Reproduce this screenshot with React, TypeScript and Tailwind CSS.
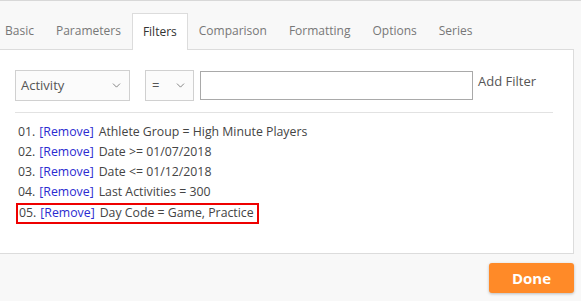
import { ChevronDown } from "lucide-react"

const tabs = ["Basic", "Parameters", "Filters", "Comparison", "Formatting", "Options", "Series"]

const filters = [
  { no: "01.", text: "Athlete Group = High Minute Players" },
  { no: "02.", text: "Date >= 01/07/2018" },
  { no: "03.", text: "Date <= 01/12/2018" },
  { no: "04.", text: "Last Activities = 300" },
  { no: "05.", text: "Day Code = Game, Practice", marked: true },
]

export default function App() {
  return (
    <div
      className="w-[581px] h-[301px] bg-[#f8f8f8] border-t border-[#d8d8d8] overflow-hidden flex flex-col text-[13px] text-[#444]"
      style={{ fontFamily: '"Open Sans", "Noto Sans", sans-serif' }}>
      <div className="flex ml-[-6px] mt-[11px] h-[37px] text-[12px]">
        {tabs.map((t) => (
          <div
            key={t}
            className={
              t === "Filters"
                ? "px-[10px] flex items-center bg-white border border-b-0 border-[#dcdcdc] text-[#333] relative top-[1px]"
                : "px-[10px] flex items-center border border-transparent text-[#777]"
            }>
            {t}
          </div>
        ))}
      </div>
      <div className="bg-white border border-l-0 border-[#dcdcdc] w-[574px] h-[205px] pl-[15px] pt-[20px]">
        <div className="flex items-center w-[538px]">
          <div className="w-[115px] h-[31px] border border-[#d0d0d0] bg-[#fbfbfb] flex items-center justify-between pl-[5px] pr-[6px] text-[#555]">
            <span>Activity</span>
            <ChevronDown size={13} strokeWidth={1.3} />
          </div>
          <div className="ml-[15px] w-[49px] h-[31px] border border-[#d0d0d0] bg-[#fbfbfb] flex items-center justify-between pl-[6px] pr-[6px] text-[#555]">
            <span>=</span>
            <ChevronDown size={13} strokeWidth={1.3} />
          </div>
          <div className="ml-[6px] w-[273px] h-[29px] border border-[#a9a9a9] bg-white" />
          <span className="ml-[5px] mb-[8px] text-[#555]">Add Filter</span>
        </div>
        <div className="mt-[11px] w-[538px] border-t border-[#e2e2e2]" />
        <div className="mt-[9px] flex flex-col items-start text-[12.3px]">
          {filters.map((f) => (
            <div
              key={f.no}
              className={
                f.marked
                  ? "h-[21px] mt-[1px] flex items-center border-2 border-[#ee0000] ml-[1px] pl-[1px] pr-[3px]"
                  : "h-[20px] flex items-center pl-[3px]"
              }>
              <span>{f.no}</span>
              <span className="ml-[4px] text-[#2b2bd0]">[Remove]</span>
              <span className="ml-[5px]">{f.text}</span>
            </div>
          ))}
        </div>
      </div>
      <div className="flex justify-end pr-[7px] pt-[9px]">
        <button className="w-[85px] h-[30px] rounded-[3px] bg-[#ff8a28] text-white font-bold text-[15px] shadow-[0_1px_3px_rgba(0,0,0,0.25)]">
          Done
        </button>
      </div>
    </div>
  )
}
